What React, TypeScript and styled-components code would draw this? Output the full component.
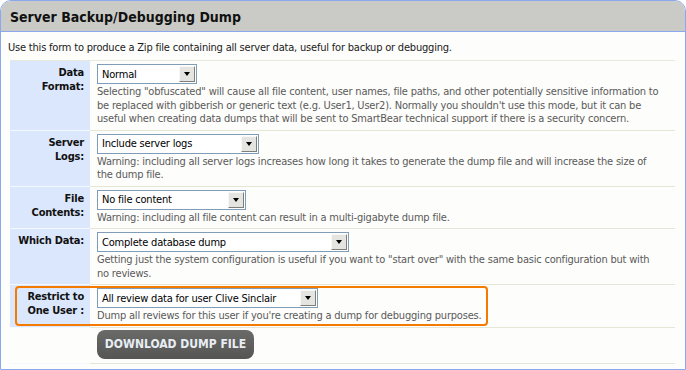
import React from "react";
import styled, { createGlobalStyle } from "styled-components";

const GlobalStyle = createGlobalStyle`
  html, body {
    margin: 0;
    padding: 0;
    background: #ffffff;
  }
  body {
    font-family: "DejaVu Sans Condensed", "Liberation Sans", sans-serif;
    font-size: 11px;
    letter-spacing: -0.2px;
    color: #1a1a1a;
  }
`;

const Panel = styled.div`
  position: relative;
  width: 686px;
  height: 370px;
  box-sizing: border-box;
  border: 1px solid #8ba7ee;
  border-radius: 11px 11px 0 0;
  background: #fdfdfb;
  overflow: hidden;
`;

const Header = styled.div`
  height: 31px;
  background: #cacbc7;
  border-bottom: 1px solid #8ba7ee;
  padding: 1px 0 0 9px;
  box-sizing: border-box;
  display: flex;
  align-items: center;
`;

const Title = styled.h1`
  margin: 0;
  font-size: 14px;
  letter-spacing: 0;
  font-weight: bold;
  color: #111;
`;

const Body = styled.div`
  padding: 9px 10px 0 9px;
`;

const Intro = styled.p`
  margin: 0 0 5px -2px;
  line-height: 14px;
  color: #1a1a1a;
`;

const Table = styled.div`
  display: flex;
  flex-direction: column;
  border-top: 1px solid #e7e9db;
`;

const Row = styled.div`
  position: relative;
  display: grid;
  grid-template-columns: 80px 1fr;
  border-bottom: 1px solid #e4e6d6;
`;

const Label = styled.div<{ $plain?: boolean }>`
  background: ${(p) => (p.$plain ? "transparent" : "#dbe7fc")};
  padding: 5px 6px 4px 0;
  text-align: right;
  font-weight: bold;
  line-height: 14px;
  color: #111;
  border-bottom: 1px solid #f4f8ff;
  margin-bottom: -1px;
`;

const Value = styled.div`
  padding: 3px 0 4px 7px;
`;

const Select = styled.div<{ $width: number }>`
  width: ${(p) => p.$width}px;
  height: 20px;
  box-sizing: border-box;
  border: 1px solid #7f9db9;
  background: #fff;
  display: flex;
  align-items: center;
  justify-content: space-between;
  padding: 1px 1px 1px 4px;
  margin-bottom: 1px;
  color: #000;
`;

const Arrow = styled.span`
  width: 16px;
  height: 16px;
  box-sizing: border-box;
  background: #e4e4e0;
  border: 1px solid;
  border-color: #f8f8f8 #7e7e7a #7e7e7a #f8f8f8;
  display: flex;
  align-items: center;
  justify-content: center;
  &::after {
    content: "";
    border-left: 3.5px solid transparent;
    border-right: 3.5px solid transparent;
    border-top: 4px solid #000;
  }
`;

const Hint = styled.div`
  color: #5a5a5a;
  line-height: 13.5px;
  padding-right: 15px;
`;

const Highlight = styled.div`
  position: absolute;
  left: 5px;
  top: 1px;
  width: 473px;
  height: 40px;
  box-sizing: border-box;
  border: 2px solid #f47a00;
  border-radius: 4px;
  pointer-events: none;
`;

const ButtonCell = styled.div`
  padding: 2px 0 4px 7px;
`;

const DownloadButton = styled.button`
  display: block;
  width: 157px;
  height: 29px;
  border: none;
  border-radius: 8px;
  background: linear-gradient(#6a6b69, #555654);
  color: #e9eef4;
  font-family: "DejaVu Sans Condensed", "Liberation Sans", sans-serif;
  font-size: 12px;
  font-weight: bold;
  letter-spacing: 0;
  cursor: pointer;
`;

type Field = {
  label: React.ReactNode;
  value: string;
  width: number;
  hint: React.ReactNode;
  highlight?: boolean;
};

const fields: Field[] = [
  {
    label: (
      <>
        Data
        <br />
        Format:
      </>
    ),
    value: "Normal",
    width: 100,
    hint:
      'Selecting "obfuscated" will cause all file content, user names, file paths, and other potentially sensitive information to be replaced with gibberish or generic text (e.g. User1, User2). Normally you shouldn\'t use this mode, but it can be useful when creating data dumps that will be sent to SmartBear technical support if there is a security concern.',
  },
  {
    label: (
      <>
        Server
        <br />
        Logs:
      </>
    ),
    value: "Include server logs",
    width: 162,
    hint: (
      <>
        Warning: including all server logs increases how long it takes to generate the dump file
        and will increase the size of
        <br />
        the dump file.
      </>
    ),
  },
  {
    label: (
      <>
        File
        <br />
        Contents:
      </>
    ),
    value: "No file content",
    width: 149,
    hint: "Warning: including all file content can result in a multi-gigabyte dump file.",
  },
  {
    label: "Which Data:",
    value: "Complete database dump",
    width: 252,
    hint:
      'Getting just the system configuration is useful if you want to "start over" with the same basic configuration but with no reviews.',
  },
  {
    label: (
      <>
        Restrict to
        <br />
        One User :
      </>
    ),
    value: "All review data for user Clive Sinclair",
    width: 221,
    hint: "Dump all reviews for this user if you're creating a dump for debugging purposes.",
    highlight: true,
  },
];

export default function App() {
  return (
    <>
      <GlobalStyle />
      <Panel>
        <Header>
          <Title>Server Backup/Debugging Dump</Title>
        </Header>
        <Body>
          <Intro>
            Use this form to produce a Zip file containing all server data, useful for backup or
            debugging.
          </Intro>
          <Table>
            {fields.map((f, i) => (
              <Row key={i}>
                <Label>{f.label}</Label>
                <Value>
                  <Select $width={f.width}>
                    {f.value}
                    <Arrow />
                  </Select>
                  <Hint>{f.hint}</Hint>
                </Value>
                {f.highlight && <Highlight />}
              </Row>
            ))}
            <Row>
              <Label $plain />
              <ButtonCell>
                <DownloadButton>DOWNLOAD DUMP FILE</DownloadButton>
              </ButtonCell>
            </Row>
          </Table>
        </Body>
      </Panel>
    </>
  );
}
